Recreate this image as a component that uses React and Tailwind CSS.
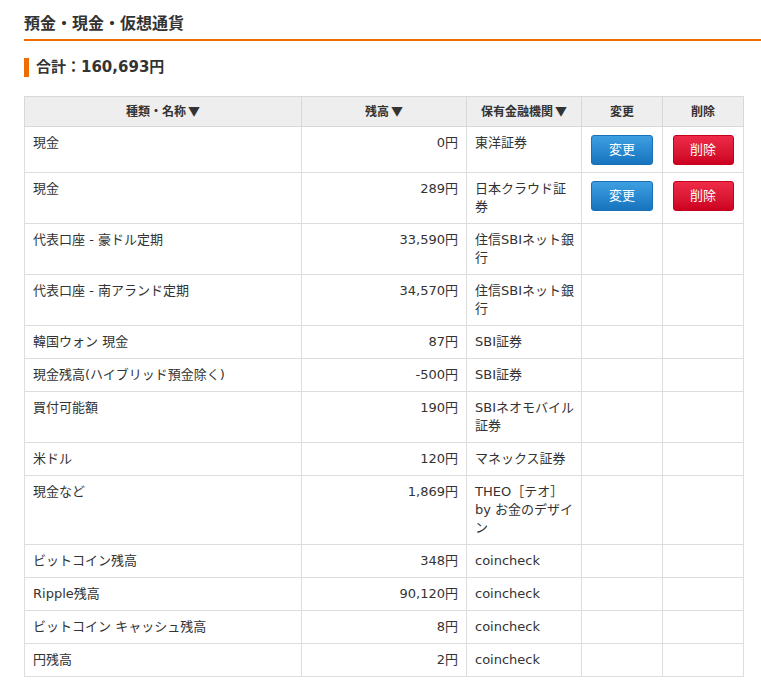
import React from "react";

const rows = [
  { name: "現金", amount: "0円", bank: "東洋証券", actions: true },
  { name: "現金", amount: "289円", bank: "日本クラウド証券", actions: true },
  { name: "代表口座 - 豪ドル定期", amount: "33,590円", bank: "住信SBIネット銀行" },
  { name: "代表口座 - 南アランド定期", amount: "34,570円", bank: "住信SBIネット銀行" },
  { name: "韓国ウォン 現金", amount: "87円", bank: "SBI証券" },
  { name: "現金残高(ハイブリッド預金除く)", amount: "-500円", bank: "SBI証券" },
  { name: "買付可能額", amount: "190円", bank: "SBIネオモバイル証券" },
  { name: "米ドル", amount: "120円", bank: "マネックス証券" },
  { name: "現金など", amount: "1,869円", bank: "THEO［テオ］ by お金のデザイン" },
  { name: "ビットコイン残高", amount: "348円", bank: "coincheck" },
  { name: "Ripple残高", amount: "90,120円", bank: "coincheck" },
  { name: "ビットコイン キャッシュ残高", amount: "8円", bank: "coincheck" },
  { name: "円残高", amount: "2円", bank: "coincheck" },
];

const font = {
  fontFamily: '"DejaVu Sans", "Noto Sans CJK JP", sans-serif',
};

const headers = [
  { label: "種類・名称", arrow: true },
  { label: "残高", arrow: true },
  { label: "保有金融機関", arrow: true },
  { label: "変更" },
  { label: "削除" },
];

export default function App() {
  return (
    <div className="bg-white w-[761px] min-h-[689px] text-[#333]" style={font}>
      <div className="pl-[24px] pt-[13px]">
        <h2 className="text-[16px] leading-[22px] font-bold text-[#333] pb-[4px] border-b-2 border-[#ef6c00]">
          預金・現金・仮想通貨
        </h2>
        <div className="mt-[17px] flex items-center h-[19px]">
          <div className="w-[5px] h-[19px] bg-[#ef6c00]" />
          <div className="ml-[7px] text-[15px] font-bold leading-[19px]">合計：160,693円</div>
        </div>
        <table className="mt-[19px] w-[720px] border-collapse table-fixed text-[13px] leading-[18px]">
          <colgroup>
            <col className="w-[277px]" />
            <col className="w-[165px]" />
            <col className="w-[115px]" />
            <col className="w-[81px]" />
            <col className="w-[81px]" />
          </colgroup>
          <thead>
            <tr className="bg-[#eeeeee] h-[30px]">
              {headers.map((h) => (
                <th
                  key={h.label}
                  className="border border-[#d8d8d8] text-[12px] font-bold text-center align-middle px-2"
                >
                  {h.label}
                  {h.arrow && (
                    <span className="ml-[2px] text-[12px]" style={{ fontFamily: '"Noto Sans CJK JP", sans-serif' }}>
                      ▼
                    </span>
                  )}
                </th>
              ))}
            </tr>
          </thead>
          <tbody>
            {rows.map((r, i) => (
              <tr key={i}>
                <td className="border border-[#dddddd] align-top px-2 py-[7px]">{r.name}</td>
                <td className="border border-[#dddddd] align-top px-2 py-[7px] text-right">{r.amount}</td>
                <td className="border border-[#dddddd] align-top pl-2 pr-[5px] py-[7px]">{r.bank}</td>
                <td className="border border-[#dddddd] align-top py-[7px] text-center">
                  {r.actions && (
                    <button className="mt-px h-[30px] w-[62px] rounded-[3px] text-white text-[13px] bg-gradient-to-b from-[#3d9fe2] to-[#1674bf] border border-[#1a70b5]">
                      変更
                    </button>
                  )}
                </td>
                <td className="border border-[#dddddd] align-top py-[7px] text-center">
                  {r.actions && (
                    <button className="mt-px h-[30px] w-[61px] rounded-[3px] text-white text-[13px] bg-gradient-to-b from-[#ee2a48] to-[#cc0020] border border-[#c4001d]">
                      削除
                    </button>
                  )}
                </td>
              </tr>
            ))}
          </tbody>
        </table>
      </div>
    </div>
  );
}
